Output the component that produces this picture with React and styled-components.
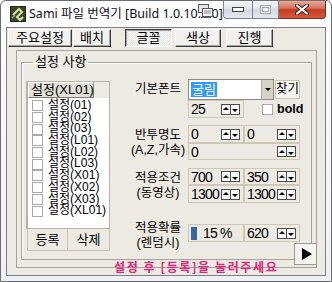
import React from 'react';
import styled, { createGlobalStyle, css } from 'styled-components';

const UI_FONT = '"Liberation Sans", "Noto Sans CJK KR", sans-serif';
const FACE = '#eceae3';

const GlobalStyle = createGlobalStyle`
  html, body { margin: 0; padding: 0; background: #ffffff; }
  body { font-family: ${UI_FONT}; font-size: 12px; color: #000; }
`;

const Window = styled.div`
  position: relative;
  width: 332px;
  height: 282px;
  box-sizing: border-box;
  border: 1px solid #6b6e73;
  border-radius: 6px 6px 0 0;
  background: linear-gradient(#fdfdfd, #eef0f3);
  display: flex;
  flex-direction: column;
  overflow: hidden;
`;

const TitleBar = styled.div`
  display: flex;
  align-items: flex-start;
  height: 26px;
  padding-left: 9px;
  flex-shrink: 0;
`;

const AppIcon = styled.svg`
  margin-top: 5px;
  flex-shrink: 0;
`;

const Title = styled.div`
  flex: 1;
  margin: 5px 0 0 3px;
  font: 12.5px/16px "Noto Sans", "Noto Sans CJK KR", sans-serif;
  color: #10101a;
  white-space: nowrap;
  overflow: hidden;
`;

const OverlayIcon = styled.svg`
  position: absolute;
  left: 196px;
  top: 2px;
`;

const Captions = styled.div`
  display: flex;
  margin: -1px 5px 0 0;
`;

const CapBtn = styled.div`
  width: ${p => p.$w}px;
  height: 19px;
  box-sizing: border-box;
  border: 1px solid #7c8594;
  border-top: none;
  border-left: ${p => (p.$first ? '1px solid #7c8594' : 'none')};
  border-radius: ${p => p.$radius || '0'};
  background: linear-gradient(#f6f7f9, #e4e8ed 45%, #d3d9e1 55%, #e6eaf0);
  display: flex;
  align-items: center;
  justify-content: center;
  ${p => p.$close && css`
    border-color: #7a2c20;
    background: linear-gradient(#eab0a0, #d9735c 45%, #c23a20 55%, #d65c40);
  `}
`;

const Client = styled.div`
  flex: 1;
  margin: 0 5px 5px 5px;
  border: 1px solid #7d8085;
  background: ${FACE};
  display: flex;
  flex-direction: column;
  min-height: 0;
`;

const TabRow = styled.div`
  display: flex;
  margin: 1px 0 0 1px;
  height: 18px;
`;

const Tab = styled.div`
  box-sizing: border-box;
  width: ${p => p.$w}px;
  margin-left: ${p => p.$ml || 0}px;
  height: 18px;
  font: 13px/16px ${UI_FONT};
  text-align: center;
  background: #f2f1ee;
  border: 1px solid;
  border-color: #ffffff #3c3c3c #3c3c3c #ffffff;
  box-shadow: inset -1px -1px 0 #a3a3a3;
  ${p => p.$active && css`
    border-color: #3c3c3c #ffffff #ffffff #3c3c3c;
    box-shadow: inset 1px 1px 0 #a3a3a3;
    background-color: #ffffff;
    background-image: repeating-conic-gradient(#e2e2e2 0 25%, #ffffff 0 50%);
    background-size: 2px 2px;
  `}
`;

const Panel = styled.div`
  position: relative;
  flex: 1;
  margin: 3px 8px 7px 9px;
  border: 1px solid #a6a498;
  display: flex;
  min-height: 0;
`;

const Group = styled.fieldset`
  flex: 1;
  margin: 4px 4px 7px 4px;
  padding: 0 4px;
  min-width: 0;
  border: 1px solid #a6a498;
  box-shadow: inset 1px 1px 0 #ffffff;
`;

const Legend = styled.legend`
  margin-left: 7px;
  padding: 0 2px;
  font: 13px/14px ${UI_FONT};
`;

const GroupBody = styled.div`
  display: flex;
`;

const LeftCol = styled.div`
  width: 84px;
  flex-shrink: 0;
  margin-top: 12px;
  display: flex;
  flex-direction: column;
`;

const ListView = styled.div`
  height: 148px;
  box-sizing: border-box;
  border: 1px solid #b7b4a6;
  border-left-width: 2px;
  background: #ffffff;
  display: flex;
  flex-direction: column;
`;

const ListHead = styled.div`
  height: 16px;
  flex-shrink: 0;
  background: ${FACE};
  display: flex;
`;

const ColHead = styled.div`
  width: 66px;
  box-sizing: border-box;
  border: 1px solid;
  border-color: #ffffff #7f7d74 #7f7d74 #ffffff;
  background: #e2e0d8;
  font: 13px/14px ${UI_FONT};
  padding-left: 2px;
  white-space: nowrap;
`;

const Items = styled.div`
  padding-top: 2px;
  display: grid;
  grid-auto-rows: 11.7px;
`;

const Item = styled.div`
  display: flex;
  align-items: center;
  padding-left: 4px;
  font: 12px/11.7px ${UI_FONT};
  white-space: nowrap;
`;

const Check = styled.span`
  width: 11px;
  height: 11px;
  box-sizing: border-box;
  border: 1px solid #a9a9a9;
  background: #ffffff;
  flex-shrink: 0;
  margin-right: ${p => p.$gap || 5}px;
`;

const ListButtons = styled.div`
  display: flex;
  height: 22px;
  margin-left: 1px;
`;

const FlatBtn = styled.div`
  flex: ${p => (p.$w ? `0 0 ${p.$w}px` : 1)};
  box-sizing: border-box;
  border: 1px solid #c9c5b2;
  border-top: none;
  & + & { border-left: none; }
  font: 13px/21px ${UI_FONT};
  text-align: center;
`;

const RightCol = styled.div`
  margin: 10px 0 0 18px;
  display: flex;
  flex-direction: column;
`;

const Field = styled.div`
  display: flex;
  align-items: center;
  margin-top: ${p => p.$mt || 0}px;
`;

const Label = styled.div`
  width: 60px;
  flex-shrink: 0;
  text-align: center;
  font: 12.5px/15px ${UI_FONT};
  white-space: nowrap;
  padding-top: ${p => p.$pt || 0}px;
`;

const Indent = styled.div`
  width: 60px;
  flex-shrink: 0;
`;

const Combo = styled.div`
  width: 86px;
  height: 21px;
  box-sizing: border-box;
  border: 1px solid #8e8c84;
  background: #ffffff;
  display: flex;
  align-items: center;
`;

const Selected = styled.span`
  margin-left: 2px;
  padding: 0 1px;
  background: #3399ff;
  color: #ffffff;
  font: 13px/15px ${UI_FONT};
`;

const DropBtn = styled.span`
  margin-left: auto;
  width: 11px;
  align-self: stretch;
  background: #d6d3c9;
  border-left: 1px solid #b0ada3;
  display: flex;
  align-items: center;
  justify-content: center;
  &::after {
    content: "";
    border-left: 3px solid transparent;
    border-right: 3px solid transparent;
    border-top: 3px solid #000;
  }
`;

const FindBtn = styled.div`
  width: 25px;
  height: 19px;
  box-sizing: border-box;
  margin-left: 1px;
  border: 1px solid #c9c5b2;
  background: #f5f4f0;
  font: 12.5px/17px ${UI_FONT};
  text-align: center;
`;

const SpinGrid = styled.div`
  display: grid;
  grid-template-columns: ${p => p.$cols || '56px 56px'};
  grid-template-rows: ${p => p.$rows || '18px'};
`;

const Cell = styled.div`
  grid-column: span ${p => p.$span || 1};
  display: flex;
  align-items: center;
  box-shadow: inset 0 0 0 1px #cdc9b6;
  padding-left: 3px;
  font: 14px/16px ${UI_FONT};
  letter-spacing: -0.8px;
  white-space: nowrap;
`;

const SpinBtns = styled.span`
  display: flex;
  margin-left: auto;
  margin-right: 4px;
  width: 19px;
  height: 11px;
  box-sizing: border-box;
  border: 1px solid #4d4d4d;
  background: #f7f7f7;
`;

const Arrow = styled.span`
  flex: 1;
  display: flex;
  align-items: center;
  justify-content: center;
  & + & { border-left: 1px solid #4d4d4d; }
  &::after {
    content: "";
    border-left: 3px solid transparent;
    border-right: 3px solid transparent;
    ${p => (p.$down
      ? 'border-top: 3px solid #000; margin-top: 3px;'
      : 'border-bottom: 3px solid #000; margin-bottom: 1px;')}
  }
`;

const BoldCheck = styled.div`
  display: flex;
  align-items: center;
  margin-left: 18px;
  font: bold 12.5px/14px ${UI_FONT};
`;

const Bar = styled.span`
  width: 6px;
  height: 13px;
  background: #3a679a;
  margin-right: 6px;
`;

const Hint = styled.div`
  margin: 9px 0 0 -14px;
  font: bold 12px/14px "Noto Sans CJK KR", sans-serif;
  letter-spacing: 1.6px;
  color: #e5237a;
  white-space: nowrap;
`;

const NextBtn = styled.div`
  position: absolute;
  right: -1px;
  bottom: 2px;
  width: 23px;
  height: 22px;
  box-sizing: border-box;
  border: 1px solid #9c9a90;
  background: #f4f3ef;
  display: flex;
  align-items: center;
  justify-content: center;
  &::after {
    content: "";
    border-top: 6px solid transparent;
    border-bottom: 6px solid transparent;
    border-left: 10px solid #000;
    margin-left: 2px;
  }
`;

function Spin({ value, span }) {
  return (
    <Cell $span={span}>
      {value}
      <SpinBtns>
        <Arrow />
        <Arrow $down />
      </SpinBtns>
    </Cell>
  );
}

const presets = ['01', '02', '03', 'L01', 'L02', 'L03', 'X01', 'X02', 'X03', 'XL01'];

const tabs = [
  { label: '주요설정', w: 64 },
  { label: '배치', w: 38, ml: 1 },
  { label: '글꼴', w: 47, ml: 14, active: true },
  { label: '색상', w: 46, ml: 3 },
  { label: '진행', w: 47, ml: 5 },
];

export default function App() {
  return (
    <>
      <GlobalStyle />
      <Window>
        <TitleBar>
          <AppIcon width="16" height="16" viewBox="0 0 16 16">
            <rect x="0.5" y="0.5" width="15" height="15" fill="#3d4530" stroke="#1f2418" />
            <path d="M3 9 L9 3 L12 6 L7 11 L10 14 L13 11" fill="none" stroke="#d6e69a" strokeWidth="2" />
            <path d="M2 12 L5 9" stroke="#9aa86a" strokeWidth="1.5" />
          </AppIcon>
          <Title>Sami 파일 번역기 [Build 1.0.10.3.0]</Title>
          <Captions>
            <CapBtn $w={30} $first $radius="0 0 0 4px">
              <svg width="12" height="5" viewBox="0 0 12 5">
                <rect x="0.5" y="0.5" width="11" height="4" fill="#ffffff" stroke="#3b3f48" />
              </svg>
            </CapBtn>
            <CapBtn $w={26}>
              <svg width="11" height="9" viewBox="0 0 11 9">
                <rect x="0.5" y="0.5" width="10" height="8" fill="#eef0f3" stroke="#a4a9b2" />
                <rect x="2.5" y="2.5" width="6" height="4" fill="none" stroke="#a4a9b2" />
              </svg>
            </CapBtn>
            <CapBtn $w={47} $close $radius="0 0 4px 0">
              <svg width="14" height="11" viewBox="0 0 14 11">
                <path d="M2 1.5 L12 9.5 M12 1.5 L2 9.5" stroke="#4a1a12" strokeWidth="4" strokeLinecap="round" />
                <path d="M2 1.5 L12 9.5 M12 1.5 L2 9.5" stroke="#ffffff" strokeWidth="2.2" strokeLinecap="round" />
              </svg>
            </CapBtn>
          </Captions>
          <OverlayIcon width="18" height="16" viewBox="0 0 18 16">
            <rect x="1.5" y="1.5" width="10" height="8" fill="#e6e6e6" stroke="#5a5a5a" />
            <rect x="5.5" y="5.5" width="10" height="8" fill="#f2f2f2" stroke="#5a5a5a" />
            <path d="M7 8 H14 M7 10 H14" stroke="#8a8a8a" />
            <path d="M4 14.5 H12" stroke="#5a5a5a" />
          </OverlayIcon>
        </TitleBar>

        <Client>
          <TabRow>
            {tabs.map(t => (
              <Tab key={t.label} $w={t.w} $ml={t.ml} $active={t.active}>{t.label}</Tab>
            ))}
          </TabRow>

          <Panel>
            <Group>
              <Legend>설정 사항</Legend>
              <GroupBody>
                <LeftCol>
                  <ListView>
                    <ListHead>
                      <ColHead>설정(XL01)</ColHead>
                    </ListHead>
                    <Items>
                      {presets.map(p => (
                        <Item key={p}>
                          <Check />
                          설정({p})
                        </Item>
                      ))}
                    </Items>
                  </ListView>
                  <ListButtons>
                    <FlatBtn $w={41}>등록</FlatBtn>
                    <FlatBtn>삭제</FlatBtn>
                  </ListButtons>
                </LeftCol>

                <RightCol>
                  <Field>
                    <Label>기본폰트</Label>
                    <Combo>
                      <Selected>굴림</Selected>
                      <DropBtn />
                    </Combo>
                    <FindBtn>찾기</FindBtn>
                  </Field>
                  <Field>
                    <Indent />
                    <SpinGrid $cols="56px">
                      <Spin value="25" />
                    </SpinGrid>
                    <BoldCheck>
                      <Check $gap={4} />
                      bold
                    </BoldCheck>
                  </Field>

                  <Field $mt={7}>
                    <Label>반투명도<br />(A,Z,가속)</Label>
                    <SpinGrid $rows="18px 17px">
                      <Spin value="0" />
                      <Spin value="0" />
                      <Spin value="0" span={2} />
                    </SpinGrid>
                  </Field>

                  <Field $mt={8}>
                    <Label>적용조건<br />(동영상)</Label>
                    <SpinGrid $rows="17px 18px">
                      <Spin value="700" />
                      <Spin value="350" />
                      <Spin value="1300" />
                      <Spin value="1300" />
                    </SpinGrid>
                  </Field>

                  <Field $mt={12}>
                    <Label $pt={6}>적용확률<br />(렌덤시)</Label>
                    <SpinGrid>
                      <Cell>
                        <Bar />
                        15 %
                      </Cell>
                      <Spin value="620" />
                    </SpinGrid>
                  </Field>

                  <Hint>설정 후 [등록]을 눌러주세요</Hint>
                </RightCol>
              </GroupBody>
            </Group>
            <NextBtn />
          </Panel>
        </Client>
      </Window>
    </>
  );
}
